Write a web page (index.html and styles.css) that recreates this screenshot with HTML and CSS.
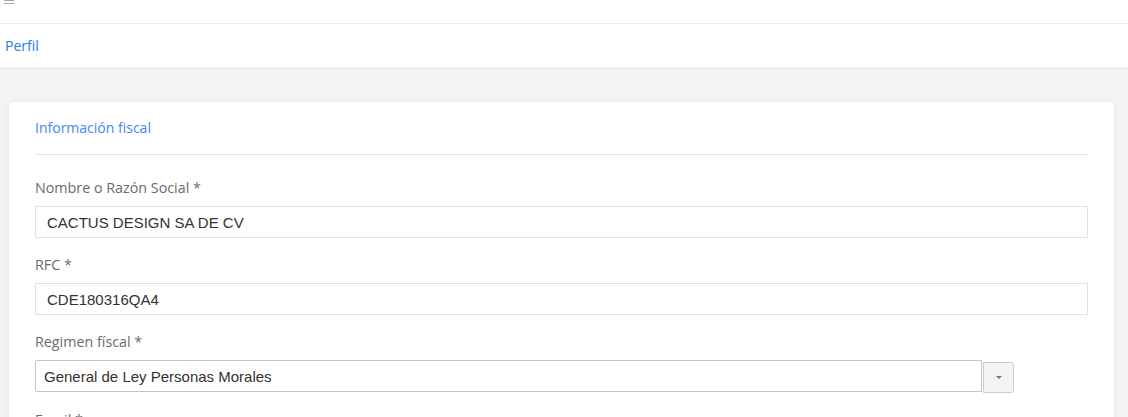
FILE: index.html
```html
<!DOCTYPE html>
<html lang="es">
<head>
<meta charset="utf-8">
<title>Perfil</title>
<link rel="stylesheet" href="styles.css">
</head>
<body>
<header class="topbar">
  <span class="hamburger"><i></i><i></i></span>
</header>
<nav class="breadcrumb">
  <a class="crumb" href="#">Perfil</a>
</nav>
<main class="content">
  <section class="card">
    <h2 class="card-title">Información fiscal</h2>
    <hr class="divider">
    <div class="field">
      <label class="label">Nombre o Razón Social *</label>
      <div class="input">CACTUS DESIGN SA DE CV</div>
    </div>
    <div class="field">
      <label class="label">RFC *</label>
      <div class="input">CDE180316QA4</div>
    </div>
    <div class="field">
      <label class="label">Regimen físcal *</label>
      <div class="select-row">
        <div class="select">General de Ley Personas Morales</div>
        <div class="select-btn"><span class="caret"></span></div>
      </div>
    </div>
    <div class="field">
      <label class="label">Email *</label>
    </div>
  </section>
</main>
</body>
</html>
```
FILE: styles.css
```css
* { box-sizing: border-box; }
html, body { margin: 0; padding: 0; }
body {
  background: #f5f5f5;
  font-family: "Open Sans", "Noto Sans", sans-serif;
  font-size: 14px;
  color: #6c6c6c;
  overflow: hidden;
  height: 417px;
}
.topbar {
  height: 24px;
  background: #fff;
  border-bottom: 1px solid #ececec;
  position: relative;
}
.hamburger {
  position: absolute;
  left: 4px;
  top: 0;
  display: flex;
  flex-direction: column;
  gap: 2px;
}
.hamburger i {
  display: block;
  width: 10px;
  height: 1px;
  background: #9aa8b3;
}
.breadcrumb {
  height: 44px;
  background: #fff;
  display: flex;
  align-items: center;
  padding-left: 5px;
  box-shadow: 0 1px 3px rgba(0,0,0,0.06);
  border-bottom: 1px solid #ebebeb;
}
.crumb {
  color: #1a7af0;
  text-decoration: none;
  font-size: 14px;
}
.content {
  padding: 34px 14px 0 9px;
}
.card {
  background: #fff;
  border-radius: 4px;
  box-shadow: 0 0 12px rgba(0,0,0,0.07);
  padding: 16px 26px 0 26px;
  height: 400px;
}
.card-title {
  margin: 0;
  font-weight: normal;
  font-size: 14px;
  line-height: 20px;
  color: #4386f5;
}
.divider {
  border: 0;
  border-top: 1px solid #e2e2e2;
  margin: 16px 0 23px 0;
}
.field {
  margin-bottom: 17px;
}
.label {
  display: block;
  line-height: 20px;
  margin-bottom: 8px;
  font-size: 14.3px;
  color: #6b6b6b;
}
.input {
  height: 32px;
  border: 1px solid #e0e0e0;
  padding: 0 11px;
  display: flex;
  align-items: center;
  font-family: "Liberation Sans", Arial, sans-serif;
  font-size: 15px;
  color: #333;
}
.select-row {
  display: flex;
  align-items: flex-start;
  width: 979px;
}
.select {
  flex: 1;
  height: 32px;
  border: 1px solid #c6c6c6;
  border-radius: 2px 0 0 2px;
  padding: 0 8px;
  display: flex;
  align-items: center;
  font-family: "Liberation Sans", Arial, sans-serif;
  font-size: 15px;
  color: #333;
}
.select-btn {
  width: 31px;
  height: 31px;
  margin-top: 2px;
  margin-left: 1px;
  background: #f4f4f4;
  border: 1px solid #cbcbcb;
  border-radius: 0 3px 3px 0;
  display: flex;
  align-items: center;
  justify-content: center;
}
.caret {
  width: 0;
  height: 0;
  border-left: 3px solid transparent;
  border-right: 3px solid transparent;
  border-top: 3px solid #777;
}
```
